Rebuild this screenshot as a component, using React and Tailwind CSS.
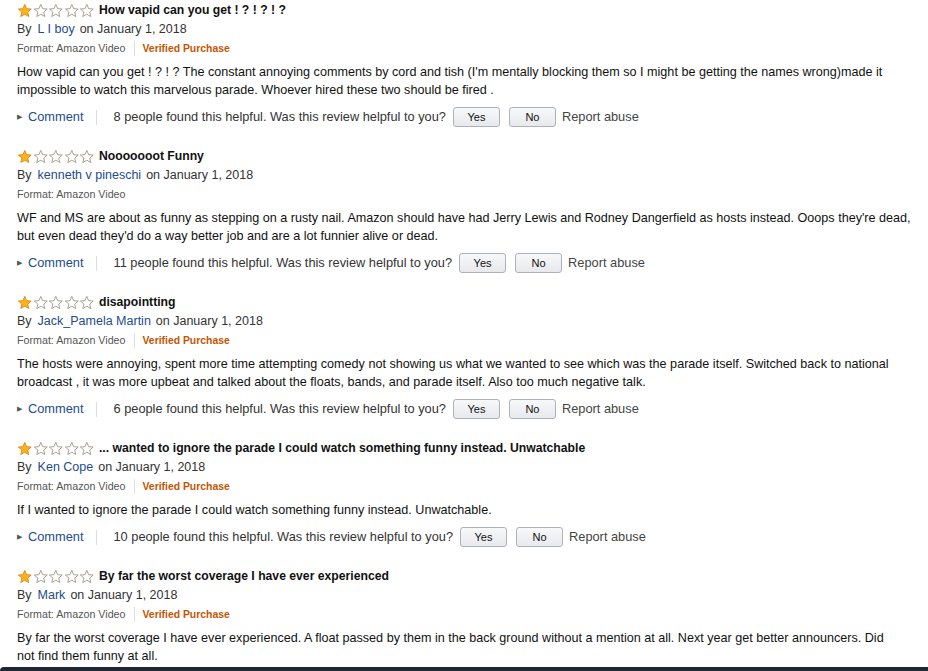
import React from "react";

const reviews = [
  {
    title: "How vapid can you get ! ? ! ? ! ?",
    author: "L I boy",
    verified: true,
    body: [
      "How vapid can you get ! ? ! ? The constant annoying comments by cord and tish (I'm mentally blocking them so I might be getting the names wrong)made it",
      "impossible to watch this marvelous parade. Whoever hired these two should be fired .",
    ],
    helpful: "8",
  },
  {
    title: "Nooooooot Funny",
    author: "kenneth v pineschi",
    verified: false,
    body: [
      "WF and MS are about as funny as stepping on a rusty nail. Amazon should have had Jerry Lewis and Rodney Dangerfield as hosts instead. Ooops they're dead,",
      "but even dead they'd do a way better job and are a lot funnier alive or dead.",
    ],
    helpful: "11",
  },
  {
    title: "disapointting",
    author: "Jack_Pamela Martin",
    verified: true,
    body: [
      "The hosts were annoying, spent more time attempting comedy not showing us what we wanted to see which was the parade itself. Switched back to national",
      "broadcast , it was more upbeat and talked about the floats, bands, and parade itself. Also too much negative talk.",
    ],
    helpful: "6",
  },
  {
    title: "... wanted to ignore the parade I could watch something funny instead. Unwatchable",
    author: "Ken Cope",
    verified: true,
    body: ["If I wanted to ignore the parade I could watch something funny instead. Unwatchable."],
    helpful: "10",
  },
  {
    title: "By far the worst coverage I have ever experienced",
    author: "Mark",
    verified: true,
    body: [
      "By far the worst coverage I have ever experienced. A float passed by them in the back ground without a mention at all. Next year get better announcers. Did",
      "not find them funny at all.",
    ],
    helpful: null,
  },
];

const STAR = "M8 1.2 L9.9 5.6 L14.6 6 L11 9.1 L12.1 13.7 L8 11.3 L3.9 13.7 L5 9.1 L1.4 6 L6.1 5.6 Z";

function Stars() {
  return (
    <div className="flex items-center">
      {[0, 1, 2, 3, 4].map((i) => (
        <svg key={i} width="15.6" height="15" viewBox="0 0 16 15" className="block">
          <path
            d={STAR}
            fill={i === 0 ? "#ffb020" : "#ffffff"}
            stroke={i === 0 ? "#d98a0c" : "#9e9482"}
            strokeWidth="0.9"
            strokeLinejoin="round"
          />
        </svg>
      ))}
    </div>
  );
}

function Review({ r }) {
  return (
    <div className="mb-[20px]">
      <div className="flex h-[19px] items-center gap-[4px]">
        <Stars />
        <span className="whitespace-nowrap text-[12.2px] font-bold text-[#111]">{r.title}</span>
      </div>
      <div className="flex h-[19px] items-center text-[12.5px] text-[#333]">
        <span>By</span>
        <span className="ml-[6px] text-[#1d4c8c]">{r.author}</span>
        <span className="ml-[5px]">on January 1, 2018</span>
      </div>
      <div className="flex h-[19px] items-center text-[10.7px] text-[#555]">
        <span>Format: Amazon Video</span>
        {r.verified && (
          <>
            <span className="mx-[8px] h-[15px] w-px bg-[#ddd]" />
            <span className="text-[10.4px] font-bold text-[#c45500]">Verified Purchase</span>
          </>
        )}
      </div>
      <div className="mt-[5px] text-[12.6px] leading-[18px] text-[#111]">
        {r.body.map((l, i) => (
          <div key={i} className="whitespace-nowrap">
            {l}
          </div>
        ))}
      </div>
      {r.helpful && (
        <div className="mt-[8px] flex h-[20px] items-center text-[12.8px]">
          <span className="text-[7px] text-[#555]">&#9654;</span>
          <span className="ml-[6px] text-[#1d4c8c]">Comment</span>
          <span className="ml-[13px] h-[15px] w-px bg-[#ddd]" />
          <span className="ml-[16px] whitespace-nowrap text-[#333]">
            {r.helpful} people found this helpful. Was this review helpful to you?
          </span>
          <button className="ml-[7px] flex h-[20px] w-[47px] items-center justify-center rounded-[3px] border border-[#adb1b8] bg-gradient-to-b from-[#f7f8fa] to-[#e7e9ec] text-[11px] text-[#111]">
            Yes
          </button>
          <button className="ml-[9px] flex h-[20px] w-[47px] items-center justify-center rounded-[3px] border border-[#adb1b8] bg-gradient-to-b from-[#f7f8fa] to-[#e7e9ec] text-[11px] text-[#111]">
            No
          </button>
          <span className="ml-[6px] whitespace-nowrap text-[#444]">Report abuse</span>
        </div>
      )}
    </div>
  );
}

export default function App() {
  return (
    <div
      className="flex h-[671px] w-[928px] flex-col overflow-hidden bg-white"
      style={{ fontFamily: '"Liberation Sans", Arial, sans-serif' }}
    >
      <div className="flex-1 overflow-hidden pl-[17px] pt-[1px]">
        {reviews.map((r, i) => (
          <Review key={i} r={r} />
        ))}
      </div>
      <div className="h-[4px] rounded-tl-[4px] bg-[#1f2733]" />
    </div>
  );
}
